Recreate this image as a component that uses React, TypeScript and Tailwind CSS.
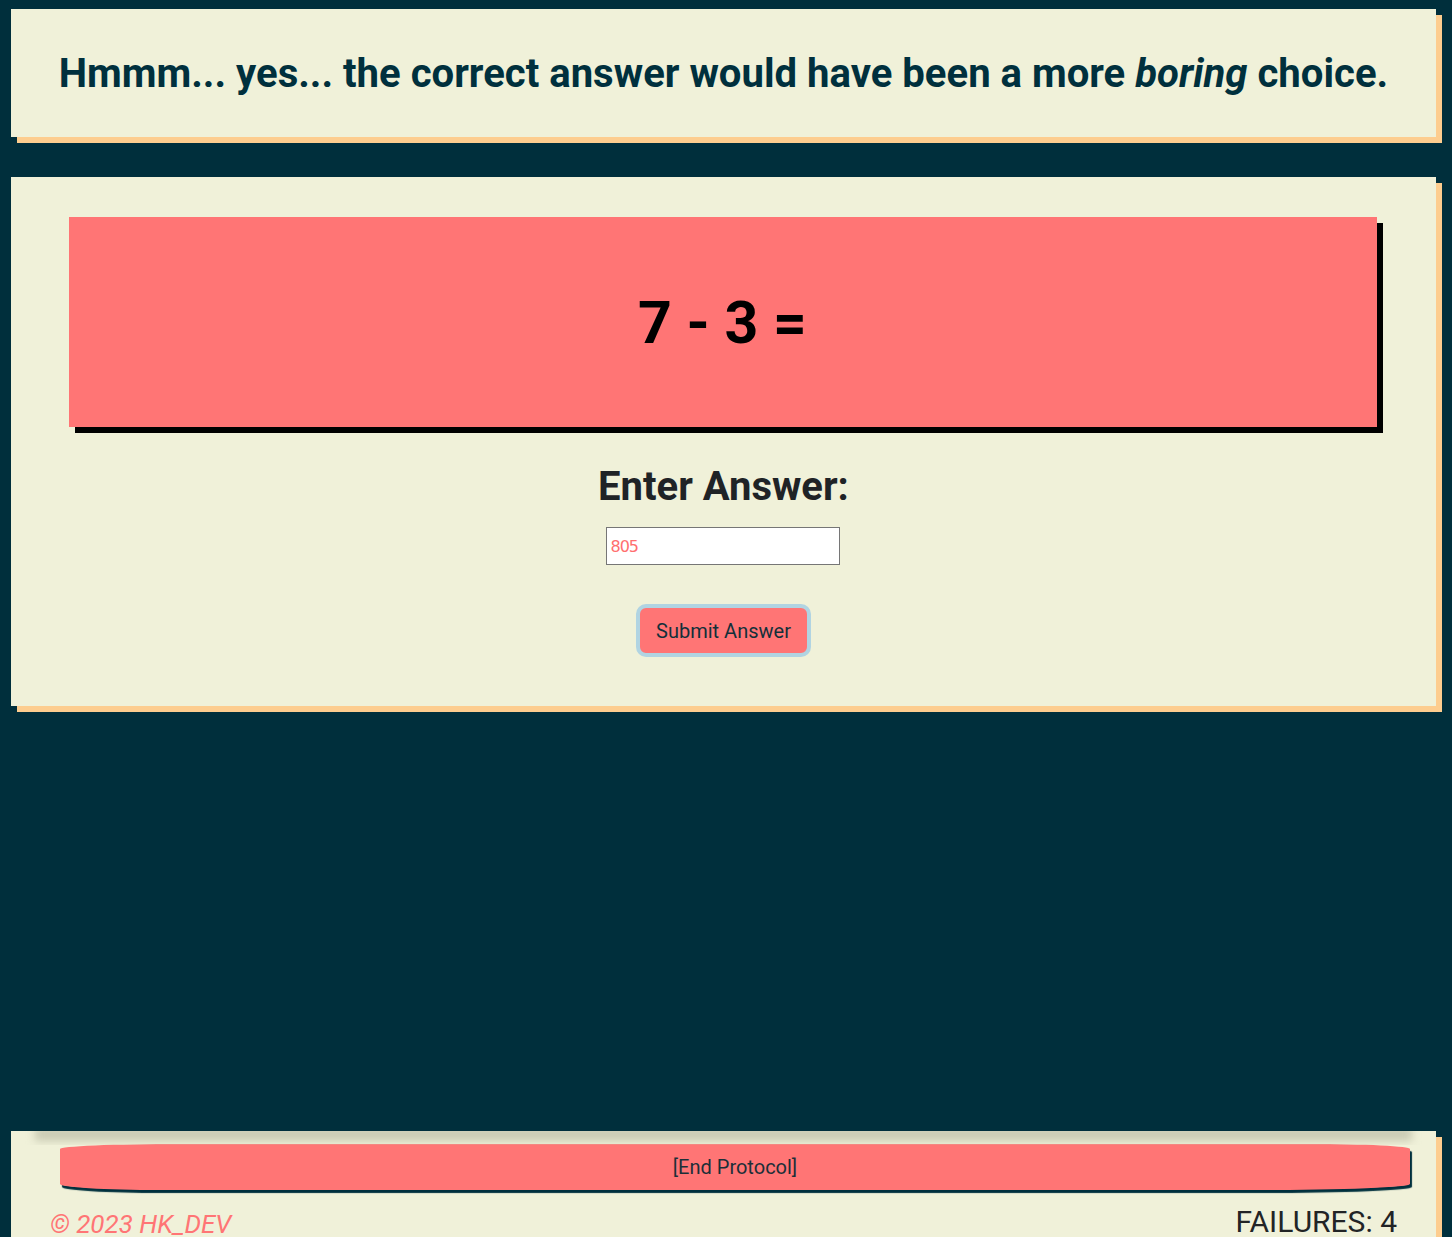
import React from "react";

export default function App() {
  return (
    <div
      className="min-h-screen w-full bg-[#002f3c] pl-[11px] pt-[9px] pb-[40px]"
      style={{ fontFamily: "Roboto, 'Liberation Sans', sans-serif" }}
    >
      {/* Top message card */}
      <div className="flex h-[128px] w-[1425px] items-center justify-center bg-[#f0f1d9] pt-[2px] shadow-[6px_6px_0_#fdcd8f]">
        <h1 className="text-[40.1px] font-bold leading-[1.2] text-[#00303d]">
          Hmmm... yes... the correct answer would have been a more <em>boring</em> choice.
        </h1>
      </div>

      {/* Main quiz card */}
      <div className="mt-[40px] flex w-[1425px] flex-col items-center bg-[#f0f1d9] pb-[49px] pt-[40px] shadow-[6px_6px_0_#fdcd8f]">
        <div className="ml-[58px] flex h-[210px] w-[1308px] items-center justify-center self-start bg-[#ff7575] shadow-[6px_6px_0_#000]">
          <span className="ml-[-1px] text-[59px] font-bold leading-none text-black">7 - 3 =</span>
        </div>
        <h2 className="mt-[36px] text-[40px] font-bold leading-[48px] text-[#1f2326]">Enter Answer:</h2>
        <input
          type="text"
          defaultValue="805"
          className="mt-[16px] ml-[-2px] h-[38px] w-[234px] border border-[#767676] bg-white px-[4px] text-[16px] tracking-[-1px] text-[#ff6f6f] outline-none"
          style={{ fontFamily: "'DejaVu Sans', sans-serif" }}
        />
        <button className="mt-[39px] h-[53px] w-[175px] rounded-[10px] border-[4px] border-[#b1d4e2] bg-[#ff7575] text-[20px] text-[#12303a]">
          Submit Answer
        </button>
      </div>

      {/* Footer card */}
      <div className="relative mt-[425px] w-[1425px] bg-[#f0f1d9] pb-[4px] shadow-[6px_6px_0_#fdcd8f]">
        <div className="h-[14px] overflow-hidden">
          <div className="-mt-[4px] mx-[24px] h-[14px] bg-[#c9cab3] blur-[4px]" />
        </div>
        <div className="ml-[49px] -mt-[1px] flex h-[46px] w-[1350px] items-center justify-center rounded-[120px_100px_150px_100px/5px_5px_6px_6px] bg-[#ff7575] text-[20px] text-[#1c2f38] shadow-[2px_3px_1px_#00303d]">
          [End Protocol]
        </div>
        <div className="mt-[14px] flex items-end justify-between px-[39px]">
          <span className="text-[26px] italic leading-[1.2] text-[#ff7575]">© 2023 HK_DEV</span>
          <span className="text-[30px] leading-[1.2] text-[#222426]">FAILURES: 4</span>
        </div>
      </div>
    </div>
  );
}
